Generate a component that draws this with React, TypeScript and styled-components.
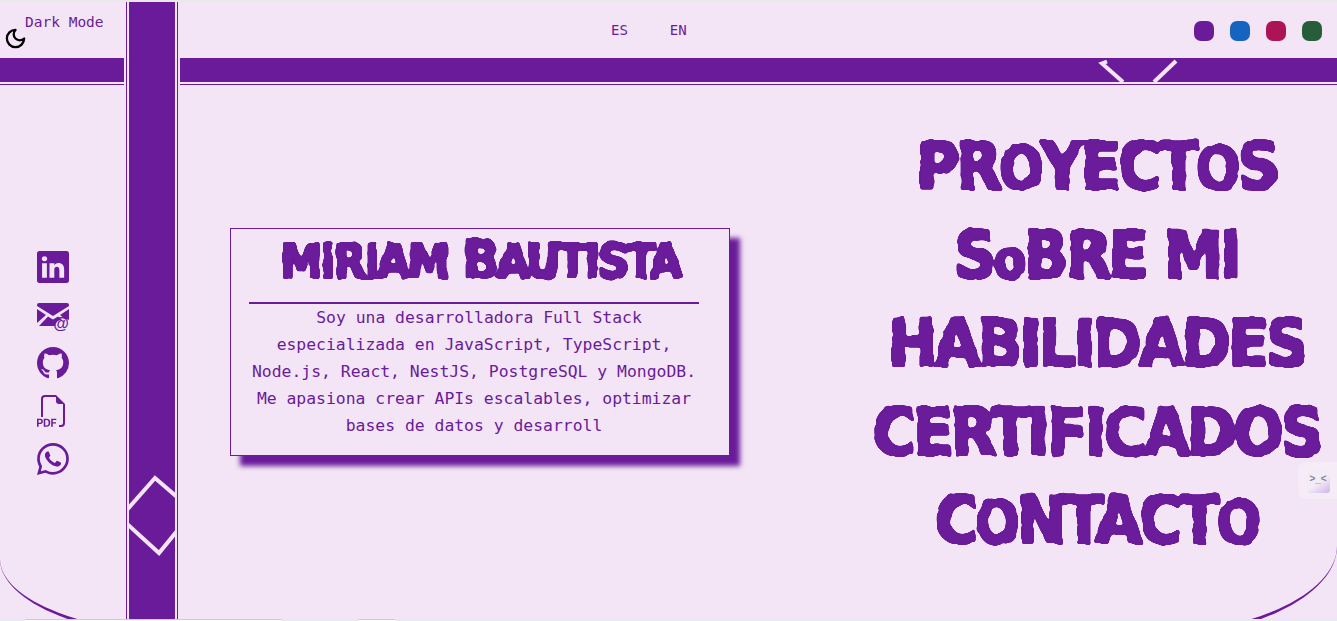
import React from 'react'
import styled, { createGlobalStyle } from 'styled-components'
import { BsFiletypePdf, BsGithub, BsLinkedin, BsWhatsapp } from 'react-icons/bs'
import { LuMoon } from 'react-icons/lu'

const PURPLE = '#6a1b9a'
const LIGHT = '#f3e5f5'

const GlobalStyle = createGlobalStyle`
    html, body {
        margin: 0;
        overflow: hidden;
        background: #e4ebee;
    }
`

const TopLine = styled.div`
    height: 2px;
    background: #ebe8ec;
`

const Page = styled.div`
    position: relative;
    height: 617px;
    overflow: hidden;
    background: ${LIGHT};
    color: ${PURPLE};
    font-family: 'DejaVu Sans Mono', monospace;
`

const Layout = styled.div`
    display: grid;
    grid-template-columns: 126px 52px 1fr;
    height: 637px;
    border-bottom: 4px solid ${PURPLE};
    border-radius: 0 0 200px 200px / 0 0 93px 80px;
    box-sizing: border-box;
`

const Column = styled.div`
    display: flex;
    flex-direction: column;
    min-width: 0;
`

const SideTop = styled.div`
    height: 56px;
    position: relative;
`

const DarkLabel = styled.div`
    padding: 12px 0 0 25px;
    font-size: 14.5px;
    line-height: 16px;
`

const MoonButton = styled.div`
    position: absolute;
    left: 4px;
    top: 25px;
    color: #000;
    font-size: 23px;
    line-height: 0;
`

const Band = styled.div<{ $right?: boolean }>`
    position: relative;
    height: 27px;
    margin: ${(p) => (p.$right ? '0 0 0 2px' : '0 2px 0 0')};
    border-bottom: 1px solid ${PURPLE};
    padding-bottom: 2px;
    box-sizing: border-box;
    background: ${PURPLE} content-box;
    overflow: hidden;
`

const Chevron = styled.svg`
    position: absolute;
    left: 915px;
    top: 0;
`

const Socials = styled.div`
    flex: 1;
    display: flex;
    flex-direction: column;
    align-items: center;
    gap: 16px;
    padding: 166px 20px 0 0;
    font-size: 32px;
    svg {
        display: block;
    }
`

const Stripe = styled.div`
    position: relative;
    border-left: 1px solid ${PURPLE};
    border-right: 1px solid ${PURPLE};
    padding: 0 2px;
    background: ${PURPLE} content-box;
    overflow: hidden;
`

const Diamond = styled.svg`
    position: absolute;
    left: 0;
    top: 469px;
`

const Header = styled.div`
    position: relative;
    height: 56px;
    display: flex;
    align-items: center;
    padding-right: 15px;
`

const Languages = styled.div`
    position: absolute;
    left: 433px;
    top: 20px;
    display: flex;
    gap: 42px;
    font-size: 14px;
    line-height: 16px;
`

const Swatches = styled.div`
    margin-left: auto;
    display: flex;
    gap: 16px;
    margin-top: 1px;
`

const Swatch = styled.span<{ $color: string }>`
    width: 20px;
    height: 20px;
    border-radius: 7px;
    background: ${(p) => p.$color};
`

const Main = styled.div`
    flex: 1;
    display: flex;
    align-items: flex-start;
    min-height: 0;
`

const Card = styled.section`
    width: 500px;
    height: 228px;
    margin: 143px 0 0 52px;
    padding: 0 30px 0 18px;
    border: 1px solid ${PURPLE};
    box-sizing: border-box;
    box-shadow: 10px 10px 5px ${PURPLE};
    flex: none;
`

const Rough = styled.span`
    filter: url(#rough);
    font-family: 'DejaVu Sans', sans-serif;
    font-weight: 700;
    font-stretch: condensed;
`

const Name = styled(Rough)`
    display: block;
    margin: 0 -12px 0 0;
    height: 73px;
    font-size: 54px;
    line-height: 62px;
    letter-spacing: -2.500px;
    text-align: center;
    white-space: nowrap;
`

const Divider = styled.hr`
    margin: 0;
    border: 0;
    height: 2px;
    background: ${PURPLE};
`

const Bio = styled.p`
    margin: 0;
    font-size: 16.4px;
    line-height: 27px;
    text-align: center;
`

const Indent = styled.span`
    padding-left: 10px;
`

const Nav = styled.nav`
    flex: 1;
    display: flex;
    flex-direction: column;
    align-items: center;
    padding: 38px 0 0 126px;
`

const NavItem = styled(Rough)`
    font-size: 66px;
    line-height: 88.500px;
    letter-spacing: -3px;
    white-space: nowrap;
`

const Small = styled.span<{ $scale?: number }>`
    font-size: ${(p) => p.$scale ?? 0.88}em;
    line-height: 0;
`

const Tab = styled.div`
    position: absolute;
    right: 0;
    top: 460px;
    width: 39px;
    height: 37px;
    border-radius: 8px 0 0 8px;
    background: #f6ecf8;
    display: flex;
    align-items: center;
    padding-left: 8px;
    box-sizing: border-box;
`

const TabFace = styled.div`
    width: 24px;
    height: 24px;
    border-radius: 3px;
    background: linear-gradient(145deg, #f3ecf6 55%, #d2b4ea);
    color: #85858f;
    font-size: 10px;
    font-weight: 700;
    line-height: 20px;
    text-align: center;
    font-family: 'Liberation Sans', sans-serif;
`

const Footer = styled.div`
    display: flex;
    height: 2px;
    padding-left: 25px;
`

const FooterTab = styled.div<{ $width: number; $gap?: number }>`
    width: ${(p) => p.$width}px;
    margin-left: ${(p) => p.$gap ?? 0}px;
    background: #fff;
    border-top: 1px solid #cfcbd3;
`

const MailIcon = styled.svg`
    color: ${PURPLE};
`

const MailAt: React.FC = () => (
    <MailIcon width="32" height="32" viewBox="0 0 32 32">
        <path
            d="M2 4h28a2 2 0 0 1 2 2v1L16 17 0 7V6a2 2 0 0 1 2-2zM0 10l9 6-9 8zM11 17.500l5 3 5-3 4 3a8 8 0 0 0-7 6.500H2zM32 10v11a8 8 0 0 0-4-1.300L23 16z"
            fill="currentColor"
        />
        <text
            x="24"
            y="30"
            fontSize="16"
            fontWeight="700"
            textAnchor="middle"
            fontFamily="Liberation Sans"
            fill="currentColor"
        >
            @
        </text>
    </MailIcon>
)

const SWATCHES = ['#6a1b9a', '#1565c0', '#ad1457', '#265d3a']

const App: React.FC = () => (
    <>
        <GlobalStyle />
        <svg width="0" height="0" style={{ position: 'absolute' }}>
            <filter id="rough" x="-5%" y="-10%" width="110%" height="120%">
                <feMorphology in="SourceGraphic" operator="dilate" radius="1.2" result="fat" />
                <feTurbulence type="fractalNoise" baseFrequency="0.07" numOctaves="2" seed="4" result="noise" />
                <feDisplacementMap in="fat" in2="noise" scale="5" result="moved" />
                <feGaussianBlur in="moved" stdDeviation="0.9" />
                <feComponentTransfer>
                    <feFuncA type="linear" slope="6" intercept="-2.2" />
                </feComponentTransfer>
            </filter>
        </svg>
        <TopLine />
        <Page>
            <Layout>
                <Column>
                    <SideTop>
                        <DarkLabel>Dark Mode</DarkLabel>
                        <MoonButton>
                            <LuMoon strokeWidth={2.4} />
                        </MoonButton>
                    </SideTop>
                    <Band />
                    <Socials>
                        <BsLinkedin />
                        <MailAt />
                        <BsGithub />
                        <BsFiletypePdf />
                        <BsWhatsapp />
                    </Socials>
                </Column>
                <Stripe>
                    <Diamond width="50" height="90" viewBox="0 0 50 90" fill="none" stroke={LIGHT} strokeWidth="4">
                        <path d="M-1 40L28 7L50 26" />
                        <path d="M-1 52L32 82L50 60" />
                    </Diamond>
                </Stripe>
                <Column>
                    <Header>
                        <Languages>
                            <span>ES</span>
                            <span>EN</span>
                        </Languages>
                        <Swatches>
                            {SWATCHES.map((color) => (
                                <Swatch key={color} $color={color} />
                            ))}
                        </Swatches>
                    </Header>
                    <Band $right>
                        <Chevron width="90" height="24" viewBox="0 0 90 24" fill="none" stroke={LIGHT} strokeWidth="4">
                            <path d="M12 3.500L7 5.500L28 24" />
                            <path d="M59 24L81 3" />
                        </Chevron>
                    </Band>
                    <Main>
                        <Card>
                            <Name>
                                <Small>MIRIAM</Small> B<Small>AUTISTA</Small>
                            </Name>
                            <Divider />
                            <Bio>
                                <Indent>Soy una desarrolladora Full Stack</Indent> especializada en JavaScript, TypeScript,
                                Node.js, React, NestJS, PostgreSQL y MongoDB. Me apasiona crear APIs escalables, optimizar
                                bases de datos y desarroll
                            </Bio>
                        </Card>
                        <Nav>
                            <NavItem>
                                PR<Small>O</Small>YECT<Small>O</Small>S
                            </NavItem>
                            <NavItem>
                                S<Small $scale={0.8}>o</Small>BRE MI
                            </NavItem>
                            <NavItem>HABILIDADES</NavItem>
                            <NavItem>CERTIFICADOS</NavItem>
                            <NavItem>
                                C<Small>O</Small>NTACT<Small>O</Small>
                            </NavItem>
                        </Nav>
                    </Main>
                </Column>
            </Layout>
            <Tab>
                <TabFace>{'>_<'}</TabFace>
            </Tab>
        </Page>
        <Footer>
            <FooterTab $width={257} />
            <FooterTab $width={37} $gap={76} />
        </Footer>
    </>
)

export default App
